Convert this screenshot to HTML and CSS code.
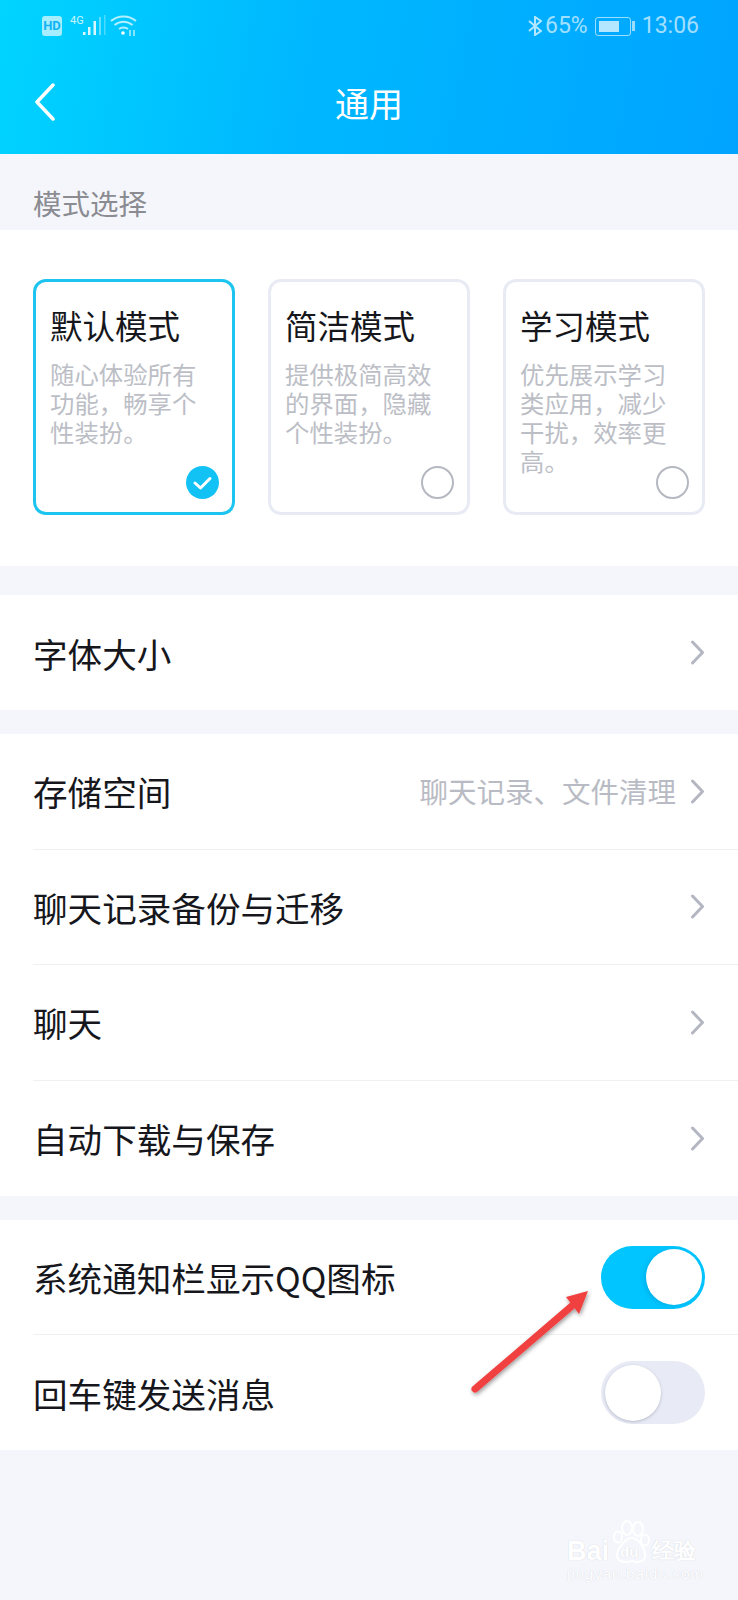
FILE: index.html
```html
<html>
  <head>
    <title>通用</title>
    <meta name="viewport" content="width=device-width, initial-scale=1">
    <link rel="stylesheet" href="styles.css">
  </head>
  <body>
    <header class="top">
      <div class="status">
        <div class="status-left">
          <span class="hd">HD</span>
          <span class="net">4G</span>
          <svg class="signal" width="24" height="22" viewBox="0 0 24 22" fill="#fff">
            <rect x="0" y="17" width="2.500" height="3" opacity=".85" />
            <rect x="5" y="12" width="2.500" height="8" opacity=".85" />
            <rect x="10.500" y="6" width="2.500" height="14" opacity=".85" />
            <rect x="16" y="2" width="2" height="18" opacity=".4" />
            <rect x="21" y="0" width="1.500" height="20" opacity=".3" />
          </svg>
          <svg class="wifi" width="27" height="22" viewBox="0 0 27 22" fill="none" stroke="#fff" stroke-opacity=".7" stroke-width="2">
            <path d="M1 6C8 0 19 0 26 6" />
            <path d="M4.500 10C10 5.500 17 5.500 22.500 10" />
            <path d="M9 14C11.500 12 15.500 12 18 14" />
            <circle cx="13" cy="18" r="1.800" fill="#fff" stroke="none" />
            <path d="M20 15V21M24 15V21" stroke-width="1.500" />
          </svg>
        </div>
        <div class="status-right">
          <svg class="bt" width="14" height="20" viewBox="0 0 14 20" fill="none" stroke="#fff" stroke-opacity=".7" stroke-width="2">
            <path d="M1 5L13 15L7 19V1L13 5L1 15" />
          </svg>
          <span class="pct">65%</span>
          <span class="battery"><span class="battery-fill"></span></span>
          <span class="battery-tip"></span>
          <span class="clock">13:06</span>
        </div>
      </div>
      <nav class="nav">
        <svg class="back" width="22" height="38" viewBox="0 0 22 38" fill="none" stroke="#fff" stroke-width="3.500" stroke-linecap="round" stroke-linejoin="round">
          <path d="M19 2L3 19L19 36" />
        </svg>
        <h1>通用</h1>
      </nav>
    </header>

    <div class="section-label">模式选择</div>
    <section class="modes">
      <div class="card selected">
        <h2>默认模式</h2>
        <p>随心体验所有<br>功能，畅享个<br>性装扮。</p>
        <svg class="radio" width="33" height="33" viewBox="0 0 33 33" fill="none">
          <circle cx="16.500" cy="16.500" r="16.500" fill="#12c2f4" />
          <path d="M9 17L14.500 22L24 12.500" stroke="#fff" stroke-width="3" stroke-linecap="round" stroke-linejoin="round" />
        </svg>
      </div>
      <div class="card">
        <h2>简洁模式</h2>
        <p>提供极简高效<br>的界面，隐藏<br>个性装扮。</p>
        <svg class="radio" width="33" height="33" viewBox="0 0 33 33" fill="none">
          <circle cx="16.500" cy="16.500" r="15.500" stroke="#b5b8c1" stroke-width="2" />
        </svg>
      </div>
      <div class="card">
        <h2>学习模式</h2>
        <p>优先展示学习<br>类应用，减少<br>干扰，效率更<br>高。</p>
        <svg class="radio" width="33" height="33" viewBox="0 0 33 33" fill="none">
          <circle cx="16.500" cy="16.500" r="15.500" stroke="#b5b8c1" stroke-width="2" />
        </svg>
      </div>
    </section>

    <ul class="group group-font">
      <li>
        <span class="name">字体大小</span>
        <svg class="chevron" width="15" height="25" viewBox="0 0 15 25" fill="none" stroke="#b4b6c2" stroke-width="3" stroke-linecap="round" stroke-linejoin="round"><path d="M2.500 2L12.500 12.500L2.500 23" /></svg>
      </li>
    </ul>

    <ul class="group group-list">
      <li>
        <span class="name">存储空间</span>
        <span class="hint">聊天记录、文件清理</span>
        <svg class="chevron" width="15" height="25" viewBox="0 0 15 25" fill="none" stroke="#b4b6c2" stroke-width="3" stroke-linecap="round" stroke-linejoin="round"><path d="M2.500 2L12.500 12.500L2.500 23" /></svg>
      </li>
      <li>
        <span class="name">聊天记录备份与迁移</span>
        <svg class="chevron" width="15" height="25" viewBox="0 0 15 25" fill="none" stroke="#b4b6c2" stroke-width="3" stroke-linecap="round" stroke-linejoin="round"><path d="M2.500 2L12.500 12.500L2.500 23" /></svg>
      </li>
      <li>
        <span class="name">聊天</span>
        <svg class="chevron" width="15" height="25" viewBox="0 0 15 25" fill="none" stroke="#b4b6c2" stroke-width="3" stroke-linecap="round" stroke-linejoin="round"><path d="M2.500 2L12.500 12.500L2.500 23" /></svg>
      </li>
      <li>
        <span class="name">自动下载与保存</span>
        <svg class="chevron" width="15" height="25" viewBox="0 0 15 25" fill="none" stroke="#b4b6c2" stroke-width="3" stroke-linecap="round" stroke-linejoin="round"><path d="M2.500 2L12.500 12.500L2.500 23" /></svg>
      </li>
    </ul>

    <ul class="group group-switch">
      <li>
        <span class="name">系统通知栏显示QQ图标</span>
        <span class="switch on"><span class="knob"></span></span>
      </li>
      <li>
        <span class="name">回车键发送消息</span>
        <span class="switch"><span class="knob"></span></span>
      </li>
    </ul>

    <svg class="arrow" width="136" height="122" viewBox="0 0 136 122" fill="none">
      <defs>
        <filter id="arrowShadow" x="-20%" y="-20%" width="140%" height="140%">
          <feDropShadow dx="1" dy="2" stdDeviation="2" flood-color="#000" flood-opacity=".4" />
        </filter>
      </defs>
      <g filter="url(#arrowShadow)">
        <path d="M9 108L107 24" stroke="#f04040" stroke-width="7" stroke-linecap="round" />
        <path d="M122 10L100 16L113 33Z" fill="#f04040" />
      </g>
    </svg>

    <div class="watermark">
      <div class="wm-top">
        <span>Bai</span>
        <svg class="paw" width="38" height="44" viewBox="0 0 38 44" fill="none" stroke="#fff" stroke-width="2">
          <ellipse cx="15" cy="8" rx="5" ry="7" />
          <ellipse cx="26" cy="9" rx="5" ry="7" />
          <ellipse cx="6" cy="17" rx="4" ry="5.500" />
          <ellipse cx="33" cy="20" rx="4" ry="5.500" />
          <path d="M20 18C13 18 5 29 5 36C5 42 14 43 20 41C26 43 33 42 33 36C33 29 27 18 20 18Z" />
        </svg>
        <span class="wm-du">du</span>
        <span class="wm-cn">经验</span>
      </div>
      <div class="wm-url">jingyan.baidu.com</div>
    </div>
  </body>
</html>
```

FILE: styles.css
```css
* {
  box-sizing: border-box;
}
html, body {
  margin: 0;
  padding: 0;
}
body {
  position: relative;
  width: 738px;
  height: 1600px;
  overflow: hidden;
  background: #f4f6fb;
  color: #16171c;
  font-family: "Noto Sans CJK SC", "Noto Sans", sans-serif;
}

.top {
  height: 154px;
  background: linear-gradient(100deg, #00d4ff 0%, #00b8ff 40%, #00a4ff 100%);
  color: #fff;
}
.status {
  display: flex;
  justify-content: space-between;
  align-items: center;
  height: 52px;
  padding: 0 39px 0 42px;
}
.status-left, .status-right {
  display: flex;
  align-items: center;
}
.hd {
  width: 20px;
  height: 20px;
  border-radius: 3px;
  background: rgba(255, 255, 255, 0.65);
  color: #10b4f4;
  font: bold 13px/20px "Roboto", sans-serif;
  text-align: center;
}
.net {
  align-self: flex-start;
  margin-left: 8px;
  font: 11px/12px "Roboto", sans-serif;
  color: rgba(255, 255, 255, 0.8);
}
.signal {
  margin-left: -1px;
}
.wifi {
  margin-left: 3px;
}
.status-right {
  color: rgba(255, 255, 255, 0.65);
  font: 23px/28px "Roboto", sans-serif;
}
.pct {
  margin-left: 3px;
}
.battery {
  display: flex;
  width: 36px;
  height: 19px;
  margin-left: 7px;
  padding: 3px;
  border: 1px solid rgba(255, 255, 255, 0.6);
  border-radius: 3px;
}
.battery-fill {
  width: 20px;
  background: rgba(255, 255, 255, 0.7);
}
.battery-tip {
  width: 3px;
  height: 10px;
  margin: 0 7px 0 1px;
  background: rgba(255, 255, 255, 0.6);
}
.nav {
  position: relative;
  display: flex;
  align-items: center;
  justify-content: center;
  height: 102px;
}
.nav h1 {
  margin: 0;
  font-size: 34px;
  font-weight: 400;
  line-height: 46px;
}
.back {
  position: absolute;
  left: 34px;
  top: 31px;
}

.section-label {
  height: 76px;
  padding: 29px 0 0 33px;
  font-size: 28.500px;
  line-height: 40px;
  color: #8b8c92;
}
.modes {
  display: grid;
  grid-template-columns: repeat(3, 202px);
  column-gap: 33px;
  height: 336px;
  padding: 49px 33px 51px;
  background: #fff;
}
.card {
  position: relative;
  height: 236px;
  padding: 23px 14px 0;
  border: 3px solid #e8ebf3;
  border-radius: 13px;
}
.card.selected {
  border-color: #1cc4ef;
}
.card h2 {
  margin: 0 0 14px;
  font-size: 32.500px;
  font-weight: 400;
  line-height: 40px;
}
.card p {
  margin: 0;
  font-size: 24.400px;
  line-height: 29px;
  color: #bcbec6;
}
.radio {
  position: absolute;
  right: 13px;
  bottom: 13px;
}

.group {
  margin: 0;
  padding: 0;
  list-style: none;
  background: #fff;
}
.group-font {
  margin-top: 29px;
}
.group-list {
  margin-top: 24px;
}
.group-switch {
  margin-top: 24px;
}
.group li {
  display: flex;
  align-items: center;
  height: 115px;
  margin-left: 33px;
  padding-right: 33px;
  border-bottom: 1px solid #eff0f4;
}
.group-list li {
  height: 115.500px;
}
.group li:last-child {
  border-bottom: 0;
}
.name {
  flex: 1;
  font-size: 34.600px;
  line-height: 46px;
}
.hint {
  margin-right: 14px;
  font-size: 28.500px;
  line-height: 40px;
  color: #b9bbc4;
}

.switch {
  display: flex;
  align-items: center;
  width: 104px;
  height: 63px;
  padding: 0 4px;
  border-radius: 32px;
  background: #e8ebf5;
}
.switch.on {
  justify-content: flex-end;
  padding: 0 3px;
  background: #00c5ff;
}
.knob {
  width: 56px;
  height: 56px;
  border-radius: 50%;
  background: #fff;
  box-shadow: 0 1px 3px rgba(90, 95, 120, 0.35);
}
.switch.on .knob {
  box-shadow: -2px 1px 4px rgba(0, 120, 170, 0.25);
}

.arrow {
  position: absolute;
  left: 466px;
  top: 1281px;
}

.watermark {
  position: absolute;
  left: 567px;
  top: 1520px;
  width: 135px;
  color: #fff;
  text-shadow: 0 0 1px #c9ccd6;
}
.wm-top {
  display: flex;
  align-items: flex-end;
  height: 44px;
  font: bold 27px/26px "Liberation Sans", sans-serif;
}
.wm-top .paw {
  margin-left: 3px;
}
.wm-du {
  position: absolute;
  left: 53px;
  top: 22px;
  font-size: 15px;
  line-height: 20px;
}
.wm-cn {
  margin-left: 2px;
  font-size: 21.500px;
  line-height: 26px;
}
.wm-url {
  font: 15.500px/20px "Liberation Sans", sans-serif;
  letter-spacing: 0.700px;
  white-space: nowrap;
}
```
